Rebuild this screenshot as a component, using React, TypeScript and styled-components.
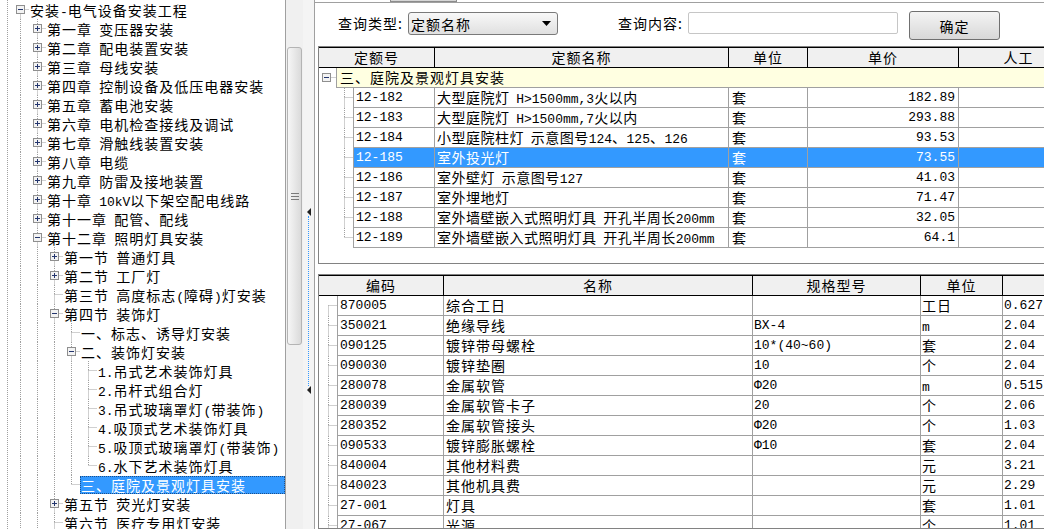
import React from "react";
import styled, { createGlobalStyle } from "styled-components";

interface TreeNode {
  label: string;
  open?: boolean;
  closed?: boolean;
  more?: boolean;
  selected?: boolean;
  children?: TreeNode[];
}

interface FlatRow {
  node: TreeNode;
  depth: number;
  guides: boolean[];
  last: boolean;
}

const GlobalStyle = createGlobalStyle`
  * { box-sizing: border-box; }
  html, body { margin: 0; padding: 0; background: #ffffff; overflow: hidden; }
  body {
    font-family: "Noto Sans CJK SC", "DejaVu Sans", sans-serif;
    font-size: 14px;
    letter-spacing: 1px;
    word-spacing: 3px;
    color: #000000;
  }
`;

const chapters = [
  "第一章 变压器安装",
  "第二章 配电装置安装",
  "第三章 母线安装",
  "第四章 控制设备及低压电器安装",
  "第五章 蓄电池安装",
  "第六章 电机检查接线及调试",
  "第七章 滑触线装置安装",
  "第八章 电缆",
  "第九章 防雷及接地装置",
  "第十章 10kV以下架空配电线路",
  "第十一章 配管、配线",
];

const tree: TreeNode[] = [
  {
    label: "安装-电气设备安装工程",
    open: true,
    more: true,
    children: [
      ...chapters.map((label) => ({ label, closed: true })),
      {
        label: "第十二章 照明灯具安装",
        open: true,
        more: true,
        children: [
          { label: "第一节 普通灯具", closed: true },
          { label: "第二节 工厂灯", closed: true },
          { label: "第三节 高度标志(障碍)灯安装" },
          {
            label: "第四节 装饰灯",
            open: true,
            children: [
              { label: "一、标志、诱导灯安装" },
              {
                label: "二、装饰灯安装",
                open: true,
                children: [
                  { label: "1.吊式艺术装饰灯具" },
                  { label: "2.吊杆式组合灯" },
                  { label: "3.吊式玻璃罩灯(带装饰)" },
                  { label: "4.吸顶式艺术装饰灯具" },
                  { label: "5.吸顶式玻璃罩灯(带装饰)" },
                  { label: "6.水下艺术装饰灯具" },
                ],
              },
              { label: "三、庭院及景观灯具安装", selected: true },
            ],
          },
          { label: "第五节 荧光灯安装", closed: true },
          { label: "第六节 医疗专用灯安装", more: true },
        ],
      },
    ],
  },
];

const flatten = (nodes: TreeNode[], depth: number, guides: boolean[], out: FlatRow[]) => {
  nodes.forEach((node, i) => {
    const last = i === nodes.length - 1 && !node.more;
    out.push({ node, depth, guides, last });
    if (node.open && node.children) {
      flatten(node.children, depth + 1, [...guides, !last], out);
    }
  });
  return out;
};

const treeRows = flatten(tree, 0, [], []);

const quotaRows = [
  ["12-182", "大型庭院灯 H>1500mm,3火以内", "套", "182.89"],
  ["12-183", "大型庭院灯 H>1500mm,7火以内", "套", "293.88"],
  ["12-184", "小型庭院柱灯 示意图号124、125、126", "套", "93.53"],
  ["12-185", "室外投光灯", "套", "73.55"],
  ["12-186", "室外壁灯 示意图号127", "套", "41.03"],
  ["12-187", "室外埋地灯", "套", "71.47"],
  ["12-188", "室外墙壁嵌入式照明灯具 开孔半周长200mm", "套", "32.05"],
  ["12-189", "室外墙壁嵌入式照明灯具 开孔半周长200mm", "套", "64.1"],
];

const materialRows = [
  ["870005", "综合工日", "", "工日", "0.627"],
  ["350021", "绝缘导线", "BX-4", "m", "2.04"],
  ["090125", "镀锌带母螺栓", "10*(40~60)", "套", "2.04"],
  ["090030", "镀锌垫圈", "10", "个", "2.04"],
  ["280078", "金属软管", "Φ20", "m", "0.515"],
  ["280039", "金属软管卡子", "20", "个", "2.06"],
  ["280352", "金属软管接头", "Φ20", "个", "1.03"],
  ["090533", "镀锌膨胀螺栓", "Φ10", "套", "2.04"],
  ["840004", "其他材料费", "", "元", "3.21"],
  ["840023", "其他机具费", "", "元", "2.29"],
  ["27-001", "灯具", "", "套", "1.01"],
  ["27-067", "光源", "", "个", "1.01"],
];

const SELECTED_QUOTA = 3;

// 반각 문자(숫자, 영문)는 고정폭 글꼴로 감싸기
const mixed = (text: string) =>
  text.split(/([\x21-\x7e]+)/).map((part, i) =>
    /^[\x21-\x7e]+$/.test(part) ? <Latin key={i}>{part}</Latin> : part
  );

// 점선 트리 가지 (tree line with optional expander box)
interface BranchProps {
  w: number;
  h: number;
  x: number;
  top?: boolean;
  bottom?: boolean;
  vertical?: boolean;
  box?: "plus" | "minus";
}

const Branch = ({ w, h, x, top = true, bottom = true, vertical = true, box }: BranchProps) => {
  const cy = 9.5;
  return (
    <BranchSvg width={w} height={h}>
      {vertical && top && <line x1={x} y1={0} x2={x} y2={cy} stroke="#a0a0a0" strokeDasharray="1 1" />}
      {vertical && bottom && <line x1={x} y1={cy} x2={x} y2={h} stroke="#a0a0a0" strokeDasharray="1 1" />}
      <line x1={x} y1={cy} x2={w} y2={cy} stroke="#a0a0a0" strokeDasharray="1 1" />
      {box && (
        <g>
          <rect x={x - 4} y={cy - 4} width={8} height={8} fill="#f3f3f3" stroke="#8f8f8f" />
          <line x1={x - 2.5} y1={cy} x2={x + 2.5} y2={cy} stroke="#24366e" />
          {box === "plus" && <line x1={x} y1={cy - 2.5} x2={x} y2={cy + 2.5} stroke="#24366e" />}
        </g>
      )}
    </BranchSvg>
  );
};

const App = () => {
  return (
    <>
      <GlobalStyle />
      <Window>
        <TreePane>
          <TreeList>
            {treeRows.map((row, i) => (
              <TreeRow key={i}>
                {row.guides.map((line, g) => (
                  <Guide key={g} $line={line} />
                ))}
                <Branch
                  w={17}
                  h={19}
                  x={8.5}
                  top={i !== 0}
                  bottom={!row.last}
                  box={row.node.open ? "minus" : row.node.closed ? "plus" : undefined}
                />
                <TreeLabel $selected={!!row.node.selected}>{mixed(row.node.label)}</TreeLabel>
              </TreeRow>
            ))}
          </TreeList>
        </TreePane>

        <ScrollTrack>
          <ScrollThumb>
            <svg width={8} height={7}>
              <line x1={0} y1={0.5} x2={8} y2={0.5} stroke="#7a7a7a" />
              <line x1={0} y1={3.5} x2={8} y2={3.5} stroke="#7a7a7a" />
              <line x1={0} y1={6.5} x2={8} y2={6.5} stroke="#7a7a7a" />
            </svg>
          </ScrollThumb>
        </ScrollTrack>

        <Splitter>
          <SplitArrow width={6} height={8}>
            <path d="M5 0 L1 4 L5 8 Z" fill="#202020" />
          </SplitArrow>
          <SplitLine />
          <SplitArrow width={6} height={8}>
            <path d="M5 0 L1 4 L5 8 Z" fill="#202020" />
          </SplitArrow>
        </Splitter>

        <RightPane>
          <TopStrip>
            <TabStub />
          </TopStrip>

          <QueryBar>
            <QueryLabel>查询类型:</QueryLabel>
            <SelectBox>
              <span>定额名称</span>
              <svg width={9} height={5}>
                <path d="M0 0 L9 0 L4.5 5 Z" fill="#000" />
              </svg>
            </SelectBox>
            <QueryLabel $gap={60}>查询内容:</QueryLabel>
            <SearchInput />
            <OkButton>确定</OkButton>
          </QueryBar>

          <Table $height={218}>
            <HeadRow $cols="116px 294px 79px 151px 120px">
              <HeadCell>定额号</HeadCell>
              <HeadCell>定额名称</HeadCell>
              <HeadCell>单位</HeadCell>
              <HeadCell>单价</HeadCell>
              <HeadCell>人工</HeadCell>
            </HeadRow>
            <BodyRow>
              <Branch w={17} h={20} x={7.5} vertical={false} box="minus" />
              <GroupCell>三、庭院及景观灯具安装</GroupCell>
            </BodyRow>
            {quotaRows.map((r, i) => (
              <BodyRow key={r[0]}>
                <Branch w={34} h={20} x={25.5} bottom={i !== quotaRows.length - 1} />
                <Cells $cols="82px 294px 79px 151px 120px" $selected={i === SELECTED_QUOTA}>
                  <Cell $mono $first>{r[0]}</Cell>
                  <Cell $tight>{mixed(r[1])}</Cell>
                  <Cell $pad={3}>{r[2]}</Cell>
                  <Cell $mono $right>{r[3]}</Cell>
                  <Cell />
                </Cells>
              </BodyRow>
            ))}
          </Table>

          <Table $gap={10}>
            <HeadRow $cols="125px 309px 168px 82px 80px">
              <HeadCell>编码</HeadCell>
              <HeadCell>名称</HeadCell>
              <HeadCell>规格型号</HeadCell>
              <HeadCell>单位</HeadCell>
              <HeadCell />
            </HeadRow>
            {materialRows.map((r, i) => (
              <BodyRow key={r[0]}>
                <Branch w={18} h={20} x={9.5} top={i !== 0} />
                <Cells $cols="107px 309px 168px 82px 80px">
                  <Cell $mono $first>{r[0]}</Cell>
                  <Cell>{r[1]}</Cell>
                  <Cell $mono $pad={1}>{r[2]}</Cell>
                  <Cell $pad={1}>{mixed(r[3])}</Cell>
                  <Cell $mono $pad={1}>{r[4]}</Cell>
                </Cells>
              </BodyRow>
            ))}
          </Table>
        </RightPane>
      </Window>
    </>
  );
};

export default App;

const Window = styled.div`
  display: flex;
  width: 1044px;
  height: 529px;
  overflow: hidden;
  background: #ffffff;
`;

const Latin = styled.span`
  font-family: "Liberation Mono", monospace;
  font-size: 13px;
  letter-spacing: 0;
`;

const TreePane = styled.div`
  flex: none;
  width: 286px;
  height: 100%;
  overflow: hidden;
  border-right: 1px solid #a0a0a0;
  background-color: #ffffff;
  background-image: linear-gradient(to bottom, #a0a0a0 50%, transparent 50%);
  background-size: 1px 2px;
  background-position: 7px 0;
  background-repeat: repeat-y;
`;

const TreeList = styled.div`
  padding-left: 12px;
`;

const TreeRow = styled.div`
  display: flex;
  align-items: center;
  height: 19px;
  white-space: nowrap;
`;

const Guide = styled.div<{ $line: boolean }>`
  flex: none;
  width: 17px;
  height: 19px;
  background-image: ${(p) => (p.$line ? "linear-gradient(to bottom, #a0a0a0 50%, transparent 50%)" : "none")};
  background-size: 1px 2px;
  background-position: 8px 0;
  background-repeat: repeat-y;
`;

const BranchSvg = styled.svg`
  display: block;
  flex: none;
`;

const TreeLabel = styled.span<{ $selected: boolean }>`
  flex: 1;
  height: 18px;
  line-height: 18px;
  padding: 0 2px 0 1px;
  overflow: hidden;
  color: ${(p) => (p.$selected ? "#ffffff" : "#000000")};
  background: ${(p) => (p.$selected ? "#3399ff" : "transparent")};
  outline: ${(p) => (p.$selected ? "1px dotted #1c4f8a" : "none")};
  outline-offset: -1px;
`;

const ScrollTrack = styled.div`
  flex: none;
  width: 17px;
  height: 100%;
  padding: 47px 1px 0;
  background: #f0f0f0;
`;

const ScrollThumb = styled.div`
  display: flex;
  align-items: center;
  justify-content: center;
  height: 298px;
  border: 1px solid #b4b4b4;
  border-radius: 3px;
  background: linear-gradient(to right, #f6f6f6, #dadada);
`;

const Splitter = styled.div`
  flex: none;
  display: flex;
  flex-direction: column;
  align-items: center;
  width: 11px;
  height: 100%;
  padding-top: 208px;
  background: #f4f4f4;
`;

const SplitArrow = styled.svg`
  display: block;
  flex: none;
`;

const SplitLine = styled.div`
  width: 0;
  height: 170px;
  border-left: 1px dotted #3399ff;
`;

const RightPane = styled.div`
  flex: 1;
  min-width: 0;
  height: 100%;
  display: flex;
  flex-direction: column;
  overflow: hidden;
  border-left: 1px solid #a0a0a0;
`;

const TopStrip = styled.div`
  flex: none;
  height: 3px;
  border-bottom: 1px solid #a0a0a0;
`;

const TabStub = styled.div`
  width: 67px;
  height: 2px;
  margin-left: 75px;
  background: #d6d6d6;
  border: 1px solid #8c8c8c;
  border-top: none;
`;

const QueryBar = styled.div`
  flex: none;
  display: flex;
  align-items: flex-start;
  height: 43px;
  padding: 9px 0 0 23px;
`;

const QueryLabel = styled.span<{ $gap?: number }>`
  flex: none;
  width: 70px;
  line-height: 23px;
  margin-left: ${(p) => p.$gap ?? 0}px;
  white-space: nowrap;
`;

const SelectBox = styled.div`
  flex: none;
  display: flex;
  align-items: center;
  justify-content: space-between;
  width: 150px;
  height: 23px;
  padding: 0 6px 0 2px;
  border: 1px solid #7a7a7a;
  border-radius: 3px;
  background: linear-gradient(to bottom, #f8f8f8, #e0e0e0);
`;

const SearchInput = styled.div`
  flex: none;
  width: 210px;
  height: 22px;
  border: 1px solid #c6c6c6;
  border-radius: 2px;
  background: #ffffff;
`;

const OkButton = styled.button`
  flex: none;
  width: 91px;
  height: 29px;
  margin: -1px 0 0 11px;
  padding: 0;
  border: 1px solid #707070;
  border-radius: 3px;
  background: linear-gradient(to bottom, #f4f4f4, #d8d8d8);
  font-family: inherit;
  font-size: 14px;
  letter-spacing: 1px;
  color: #000000;
`;

const Table = styled.div<{ $height?: number; $gap?: number }>`
  flex: ${(p) => (p.$height ? "none" : "1")};
  height: ${(p) => (p.$height ? `${p.$height}px` : "auto")};
  width: 760px;
  margin: ${(p) => p.$gap ?? 0}px 0 0 3px;
  border: 1px solid #828282;
  overflow: hidden;
`;

const HeadRow = styled.div<{ $cols: string }>`
  display: grid;
  grid-template-columns: ${(p) => p.$cols};
  height: 21px;
  border-top: 1px solid #000000;
  border-bottom: 1px solid #000000;
  background: #f0f0f0;
`;

const HeadCell = styled.div`
  line-height: 19px;
  text-align: center;
  border-right: 1px solid #000000;
  white-space: nowrap;
  overflow: hidden;
`;

const BodyRow = styled.div`
  display: flex;
  height: 20px;
`;

const GroupCell = styled.div`
  flex: 1;
  line-height: 19px;
  padding-left: 3px;
  border-left: 1px solid #a0a0a0;
  border-bottom: 1px solid #a0a0a0;
  background: #ffffe1;
  white-space: nowrap;
`;

const Cells = styled.div<{ $cols: string; $selected?: boolean }>`
  display: grid;
  grid-template-columns: ${(p) => p.$cols};
  height: 20px;
  border-bottom: 1px solid #a0a0a0;
  background: ${(p) => (p.$selected ? "#3399ff" : "#ffffff")};
  color: ${(p) => (p.$selected ? "#ffffff" : "#000000")};
`;

const Cell = styled.div<{ $mono?: boolean; $right?: boolean; $first?: boolean; $tight?: boolean; $pad?: number }>`
  line-height: 19px;
  padding: 0 ${(p) => (p.$right ? 3 : 0)}px 0 ${(p) => p.$pad ?? 2}px;
  border-left: ${(p) => (p.$first ? "1px solid #a0a0a0" : "none")};
  border-right: 1px solid #a0a0a0;
  text-align: ${(p) => (p.$right ? "right" : "left")};
  font-family: ${(p) =>
    p.$mono ? '"Liberation Mono", "Noto Sans CJK SC", monospace' : '"Noto Sans CJK SC", "DejaVu Sans", sans-serif'};
  font-size: ${(p) => (p.$mono ? 13 : 14)}px;
  letter-spacing: ${(p) => (p.$mono ? 0 : p.$tight ? 0.5 : 1)}px;
  white-space: nowrap;
  overflow: hidden;
`;
